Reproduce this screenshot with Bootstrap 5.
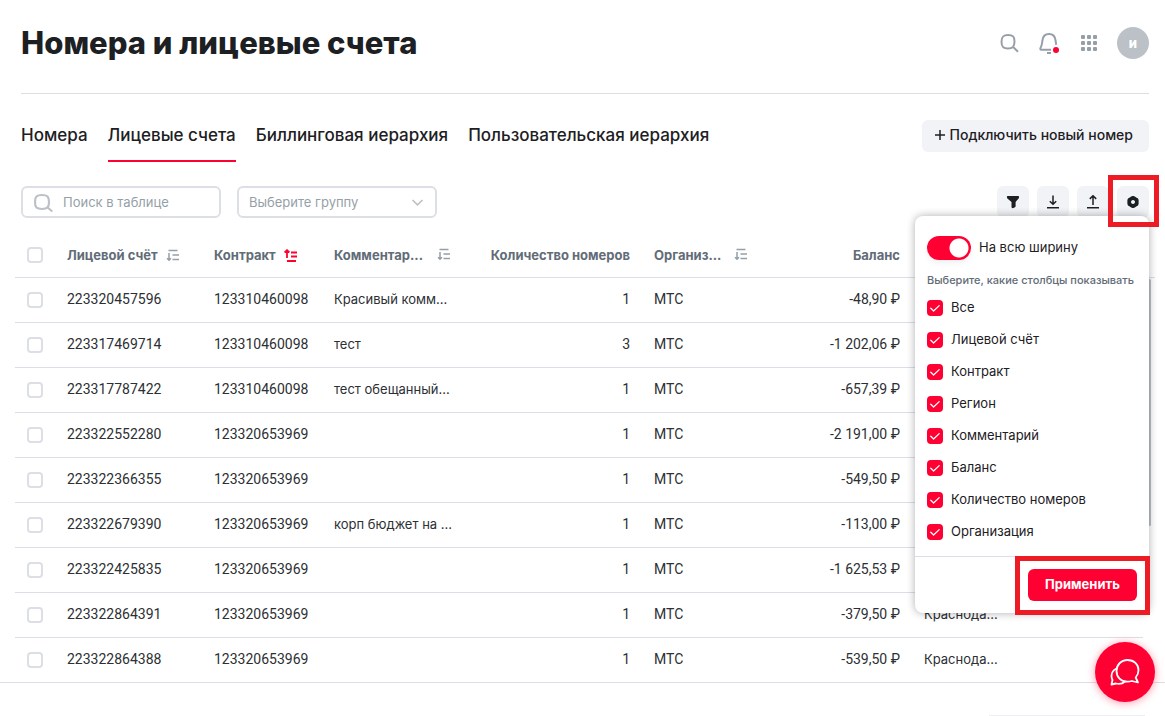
<!DOCTYPE html>
<html lang="ru">
<head>
<meta charset="utf-8">
<meta name="viewport" content="width=device-width, initial-scale=1">
<title>Номера и лицевые счета</title>
<link href="https://cdn.jsdelivr.net/npm/bootstrap@5.3.0/dist/css/bootstrap.min.css" rel="stylesheet">
<style>
:root{--red:#ff0032;--ink:#1d2023;--muted:#626c77;--line:#dcdee6;--soft:#f2f3f7}
body{font-family:Inter,Roboto,sans-serif;font-size:13px;line-height:20px;color:var(--ink);background:#fff}
.page-head{margin:0 16px 0 21px;height:94px;border-bottom:1px solid #dcdee2;padding-bottom:8px}
.page-head h1{font-size:31px;line-height:36px;font-weight:800}
.icon-btn{border:0;background:none;padding:0;width:24px;height:24px;display:block;color:#969fa8}
.icon-btn svg,.tool svg{display:block;margin:auto}
.avatar{width:32px;height:32px;border-radius:50%;background:#bbc1c7;color:#fff;font-weight:800;font-size:13px;border:0;padding:0}
.tabs-row{margin:26px 16px 0 21px}
.tab-list{gap:20px}
.tab-link{font-size:17px;line-height:24px;font-weight:500;color:var(--ink);text-decoration:none;padding:3px 0 13px;border-bottom:2px solid transparent;white-space:nowrap}
.tab-link.active{border-color:var(--red)}
.btn-soft{background:var(--soft);border:0;border-radius:6px;height:32px;font-size:14px;font-weight:500;padding:0 16px 2px 12px;gap:4px;color:var(--ink)}
.tools-row{margin:24px 16px 0 21px}
.field{width:200px;height:32px;border:2px solid #dcdfe6;border-radius:6px;background:#fff;color:#969fa8;font-size:13px;line-height:20px}
.field::placeholder{color:#969fa8;opacity:1}
.field-search{padding:2px 8px 2px 40px}
.field-select{padding:0 30px 0 10px;appearance:none}
.search-mark{position:absolute;left:12px;top:7px}
.select-mark{position:absolute;right:13px;top:12px}
.tool{width:32px;height:32px;border:0;border-radius:6px;background:var(--soft);padding:0;color:var(--ink)}
.box-check{appearance:none;width:16px;height:16px;border:2px solid #dcdfe6;border-radius:4px;background:#fff;display:block;margin:0;flex:none}
.box-check:checked{border:0;background:var(--red) url("data:image/svg+xml,%3Csvg xmlns='http://www.w3.org/2000/svg' viewBox='0 0 16 16'%3E%3Cpath d='M3.8 8.3 6.6 11 12.2 5.6' fill='none' stroke='%23fff' stroke-width='1.3' stroke-linecap='round' stroke-linejoin='round'/%3E%3C/svg%3E")}
.table-zone{margin:15px 10px 0 15px}
.grid{table-layout:fixed;width:100%;border-collapse:separate;border-spacing:0}
.grid th,.grid td{height:45px;padding:0 12px;border-bottom:1px solid var(--line);white-space:nowrap;overflow:hidden;vertical-align:middle}
.grid th{color:var(--muted);font-weight:700}
.grid th svg{color:#969fa8}
.grid th svg.sorted{color:var(--red)}
.grid td{color:#2c2f33}
.grid td+td{padding-bottom:2px}
.grid .gutter{padding:0}
.grid td.gutter{border-bottom:0}
.grid .num{font-family:Roboto,sans-serif;font-size:14px}
.c-check{width:40px}.c-acc{width:147px}.c-con{width:120px}.c-com{width:141px}.c-cnt{width:179px}.c-org{width:118px}.c-bal{width:152px}.c-gut{width:12px}
.thumb{position:absolute;right:4px;top:46px;width:3px;height:247px;background:#bbc1c7;border-radius:2px}
.bottom-line{height:1px;background:var(--line);margin-top:-1px}
.foot-line{height:1px;background:#eceef2;width:156px;margin:32px 20px 0 auto}
.columns-menu{position:absolute;right:0;top:30px;width:234px;background:#fff;border-radius:8px;box-shadow:0 0 8px rgba(0,0,0,.32);z-index:5}
.menu-body{padding:20px 12px 12px}
.menu-body label{line-height:22px;padding-bottom:2px}
.caption{font-size:11px;line-height:16px;font-weight:500;color:var(--muted);white-space:nowrap}
.toggle{appearance:none;width:44px;height:24px;border-radius:12px;background:var(--red) radial-gradient(circle at 32px 12px,#fff 9px,transparent 10px);margin:0;flex:none;box-shadow:0 3px 6px rgba(0,0,0,.06)}
.menu-foot{border-top:1px solid var(--line);padding:12px}
.btn-apply{background:var(--red);color:#fff;border:0;border-radius:6px;height:32px;width:109px;font-size:13px;font-weight:700;display:block;padding:0 0 2px}
.frame{position:absolute;border:5px solid #ed1c24;pointer-events:none;z-index:6}
.frame-gear{inset:-11px -10px -9px -9px}
.frame-apply{inset:-13px -13px -14px -13px}
.chat{position:fixed;right:10px;bottom:14px;width:60px;height:60px;border-radius:50%;border:0;background:var(--red);box-shadow:0 1px 8px rgba(255,0,50,.4);z-index:8;padding:0}
</style>
</head>
<body>
<svg width="0" height="0" class="position-absolute" aria-hidden="true">
  <symbol id="sort-down" viewBox="0 0 14 14"><path d="M3 4v7M1 9.300 3 11.300l2-2M2.500 1.500h9M6.500 6H13M6.500 10.500H13" fill="none" stroke="currentColor" stroke-width="1.500"/></symbol>
  <symbol id="sort-up" viewBox="0 0 14 14"><path d="M3 1v8M.6 3.500 3 1.200l2.400 2.300M7 3.500h6M7 7.500h6M3 12h9" fill="none" stroke="currentColor" stroke-width="1.800"/></symbol>
</svg>

<header class="page-head d-flex align-items-center justify-content-between">
  <h1 class="m-0">Номера и лицевые счета</h1>
  <div class="d-flex align-items-center gap-3">
    <button class="icon-btn" aria-label="Поиск"><svg width="24" height="24" viewBox="0 0 24 24" fill="none" stroke="currentColor" stroke-width="2"><path d="M11 4c5 0 6.500 1.500 6.500 6.500S16 17.500 11 17.500 4.500 15.500 4.500 10.700 6 4 11 4zM15.500 15.300 21 20.800"/></svg></button>
    <button class="icon-btn" aria-label="Уведомления"><svg width="24" height="24" viewBox="0 0 24 24" fill="none" stroke="currentColor" stroke-width="2"><path d="M14 18.800H4.500c-1.300 0-1.500-1-.8-2.200 1.300-2.300 1.300-4 1.700-7C5.900 5 8 3 12 3s6.100 2 6.600 6.600c.2 1.800.3 3 .7 4.200M10 22h4"/><circle cx="19" cy="19" r="3" fill="#ff0032" stroke="none"/></svg></button>
    <button class="icon-btn" aria-label="Сервисы"><svg width="24" height="24" viewBox="0 0 24 24" fill="currentColor"><g id="dots"><rect x="4" y="4" width="4" height="4" rx="1"/><rect x="10" y="4" width="4" height="4" rx="1"/><rect x="16" y="4" width="4" height="4" rx="1"/></g><use href="#dots" y="6"/><use href="#dots" y="12"/></svg></button>
    <button class="avatar" aria-label="Профиль">и</button>
  </div>
</header>

<div class="tabs-row d-flex align-items-start justify-content-between">
  <nav class="tab-list d-flex">
    <a class="tab-link" href="#">Номера</a>
    <a class="tab-link active" href="#">Лицевые счета</a>
    <a class="tab-link" href="#">Биллинговая иерархия</a>
    <a class="tab-link" href="#">Пользовательская иерархия</a>
  </nav>
  <button class="btn-soft d-flex align-items-center text-nowrap"><svg width="12" height="12" viewBox="0 0 12 12"><path d="M6 1v10M1 6h10" stroke="currentColor" stroke-width="1.500"/></svg>Подключить новый номер</button>
</div>

<div class="tools-row d-flex justify-content-between">
  <div class="d-flex gap-3">
    <div class="position-relative">
      <svg class="search-mark" width="20" height="20" viewBox="0 0 20 20" fill="none" stroke="#bbc1c7" stroke-width="2.200"><path d="M9 2c5.500 0 7 1.500 7 7s-1.500 7-7 7-7-1.500-7-7 1.500-7 7-7zM13.500 13.500l5.800 5"/></svg>
      <input class="field field-search d-block" type="text" placeholder="Поиск в таблице" aria-label="Поиск в таблице">
    </div>
    <div class="position-relative">
      <select class="field field-select d-block" aria-label="Группа"><option>Выберите группу</option></select>
      <svg class="select-mark" width="13" height="9" viewBox="0 0 13 9" fill="none" stroke="#bbc1c7" stroke-width="1.600"><path d="M1.500 2 6.500 6.800l5-4.800"/></svg>
    </div>
  </div>
  <div class="position-relative d-flex gap-2">
    <button class="tool" aria-label="Фильтр"><svg width="16" height="16" viewBox="0 0 16 16" fill="currentColor"><path d="M3 2h10c1.300 0 1.300 1.500.6 2.400L10.600 8v4.500c0 .9-3 2-3.600 1.500-.6-.4-.5-1.200-.5-2V8L2.400 4.400C1.600 3.500 1.700 2 3 2z"/></svg></button>
    <button class="tool" aria-label="Скачать"><svg width="16" height="16" viewBox="0 0 16 16" fill="none" stroke="currentColor" stroke-width="1.500"><path d="M8 1.500V10M4.800 7.200 8 10.300l3.200-3.100M2 13.800h12"/></svg></button>
    <button class="tool" aria-label="Загрузить"><svg width="16" height="16" viewBox="0 0 16 16" fill="none" stroke="currentColor" stroke-width="1.500"><path d="M8 11V2M4.800 4.900 8 1.800l3.200 3.100M2 13.800h12"/></svg></button>
    <div class="position-relative">
      <button class="tool d-block" aria-label="Настройки"><svg width="16" height="16" viewBox="0 0 16 16" fill="none" stroke="currentColor"><circle cx="8" cy="8" r="3.900" stroke-width="3.600"/><path stroke-width="4" stroke-linecap="round" d="M8 4h.01M8 12h.01M4.500 6h.01M11.500 6h.01M4.500 10h.01M11.500 10h.01"/></svg></button>
      <span class="frame frame-gear"></span>
    </div>
    <div class="columns-menu">
      <div class="menu-body">
        <div class="d-flex gap-2"><input class="toggle" type="checkbox" role="switch" id="full" checked><label for="full">На всю ширину</label></div>
        <div class="caption mt-2 pt-1 mb-2">Выберите, какие столбцы показывать</div>
        <div class="d-grid gap-2">
          <div class="d-flex align-items-center gap-2"><input class="box-check" type="checkbox" id="k1" checked><label for="k1">Все</label></div>
          <div class="d-flex align-items-center gap-2"><input class="box-check" type="checkbox" id="k2" checked><label for="k2">Лицевой счёт</label></div>
          <div class="d-flex align-items-center gap-2"><input class="box-check" type="checkbox" id="k3" checked><label for="k3">Контракт</label></div>
          <div class="d-flex align-items-center gap-2"><input class="box-check" type="checkbox" id="k4" checked><label for="k4">Регион</label></div>
          <div class="d-flex align-items-center gap-2"><input class="box-check" type="checkbox" id="k5" checked><label for="k5">Комментарий</label></div>
          <div class="d-flex align-items-center gap-2"><input class="box-check" type="checkbox" id="k6" checked><label for="k6">Баланс</label></div>
          <div class="d-flex align-items-center gap-2"><input class="box-check" type="checkbox" id="k7" checked><label for="k7">Количество номеров</label></div>
          <div class="d-flex align-items-center gap-2"><input class="box-check" type="checkbox" id="k8" checked><label for="k8">Организация</label></div>
        </div>
      </div>
      <div class="menu-foot d-flex justify-content-end">
        <div class="position-relative"><button class="btn-apply">Применить</button><span class="frame frame-apply"></span></div>
      </div>
    </div>
  </div>
</div>

<main class="table-zone position-relative">
  <table class="grid">
    <colgroup><col class="c-check"><col class="c-acc"><col class="c-con"><col class="c-com"><col class="c-cnt"><col class="c-org"><col class="c-bal"><col><col class="c-gut"></colgroup>
    <thead>
      <tr>
        <th><input class="box-check" type="checkbox" aria-label="Выбрать все"></th>
        <th>Лицевой счёт<svg class="ms-2" width="14" height="14"><use href="#sort-down"/></svg></th>
        <th>Контракт<svg class="ms-2 sorted" width="14" height="14"><use href="#sort-up"/></svg></th>
        <th><div class="d-flex justify-content-between align-items-center">Комментар...<svg width="14" height="14"><use href="#sort-down"/></svg></div></th>
        <th class="text-end">Количество номеров</th>
        <th><div class="d-flex justify-content-between align-items-center">Организ...<svg width="14" height="14"><use href="#sort-down"/></svg></div></th>
        <th class="text-end">Баланс</th><th></th><th class="gutter"></th>
      </tr>
    </thead>
    <tbody>
      <tr><td><input class="box-check" type="checkbox" aria-label="223320457596"></td><td class="num">223320457596</td><td class="num">123310460098</td><td>Красивый комм...</td><td class="num text-end">1</td><td class="num">МТС</td><td class="num text-end">-48,90 ₽</td><td></td><td class="gutter"></td></tr>
      <tr><td><input class="box-check" type="checkbox" aria-label="223317469714"></td><td class="num">223317469714</td><td class="num">123310460098</td><td>тест</td><td class="num text-end">3</td><td class="num">МТС</td><td class="num text-end">-1 202,06 ₽</td><td></td><td class="gutter"></td></tr>
      <tr><td><input class="box-check" type="checkbox" aria-label="223317787422"></td><td class="num">223317787422</td><td class="num">123310460098</td><td>тест обещанный...</td><td class="num text-end">1</td><td class="num">МТС</td><td class="num text-end">-657,39 ₽</td><td></td><td class="gutter"></td></tr>
      <tr><td><input class="box-check" type="checkbox" aria-label="223322552280"></td><td class="num">223322552280</td><td class="num">123320653969</td><td></td><td class="num text-end">1</td><td class="num">МТС</td><td class="num text-end">-2 191,00 ₽</td><td></td><td class="gutter"></td></tr>
      <tr><td><input class="box-check" type="checkbox" aria-label="223322366355"></td><td class="num">223322366355</td><td class="num">123320653969</td><td></td><td class="num text-end">1</td><td class="num">МТС</td><td class="num text-end">-549,50 ₽</td><td></td><td class="gutter"></td></tr>
      <tr><td><input class="box-check" type="checkbox" aria-label="223322679390"></td><td class="num">223322679390</td><td class="num">123320653969</td><td>корп бюджет на ...</td><td class="num text-end">1</td><td class="num">МТС</td><td class="num text-end">-113,00 ₽</td><td></td><td class="gutter"></td></tr>
      <tr><td><input class="box-check" type="checkbox" aria-label="223322425835"></td><td class="num">223322425835</td><td class="num">123320653969</td><td></td><td class="num text-end">1</td><td class="num">МТС</td><td class="num text-end">-1 625,53 ₽</td><td></td><td class="gutter"></td></tr>
      <tr><td><input class="box-check" type="checkbox" aria-label="223322864391"></td><td class="num">223322864391</td><td class="num">123320653969</td><td></td><td class="num text-end">1</td><td class="num">МТС</td><td class="num text-end">-379,50 ₽</td><td>Краснода...</td><td class="gutter"></td></tr>
      <tr><td><input class="box-check" type="checkbox" aria-label="223322864388"></td><td class="num">223322864388</td><td class="num">123320653969</td><td></td><td class="num text-end">1</td><td class="num">МТС</td><td class="num text-end">-539,50 ₽</td><td>Краснода...</td><td class="gutter"></td></tr>
    </tbody>
  </table>
  <div class="thumb"></div>
</main>
<div class="bottom-line"></div>
<div class="foot-line"></div>

<button class="chat" aria-label="Чат"><svg width="32" height="30" viewBox="0 0 32 30" fill="none" stroke="#fff" stroke-width="1.800" stroke-linejoin="round"><path d="M18.500 3c6.500 0 11 4.200 11 10 0 3-1 5.500-2.800 7.500l2.300 5-6.200-1.500c-1.500.5-3 .7-4.600.7C12 24.700 7.500 20 7.500 14S12 3 18.500 3z"/><path d="M7.500 11.500c-3 1.500-5 4-5 7.500 0 1.500.4 2.800 1 4L2.500 27.500l4.500-1c3 .8 6.500.3 9-2"/></svg></button>
<script src="https://cdn.jsdelivr.net/npm/bootstrap@5.3.0/dist/js/bootstrap.bundle.min.js"></script>
</body>
</html>
